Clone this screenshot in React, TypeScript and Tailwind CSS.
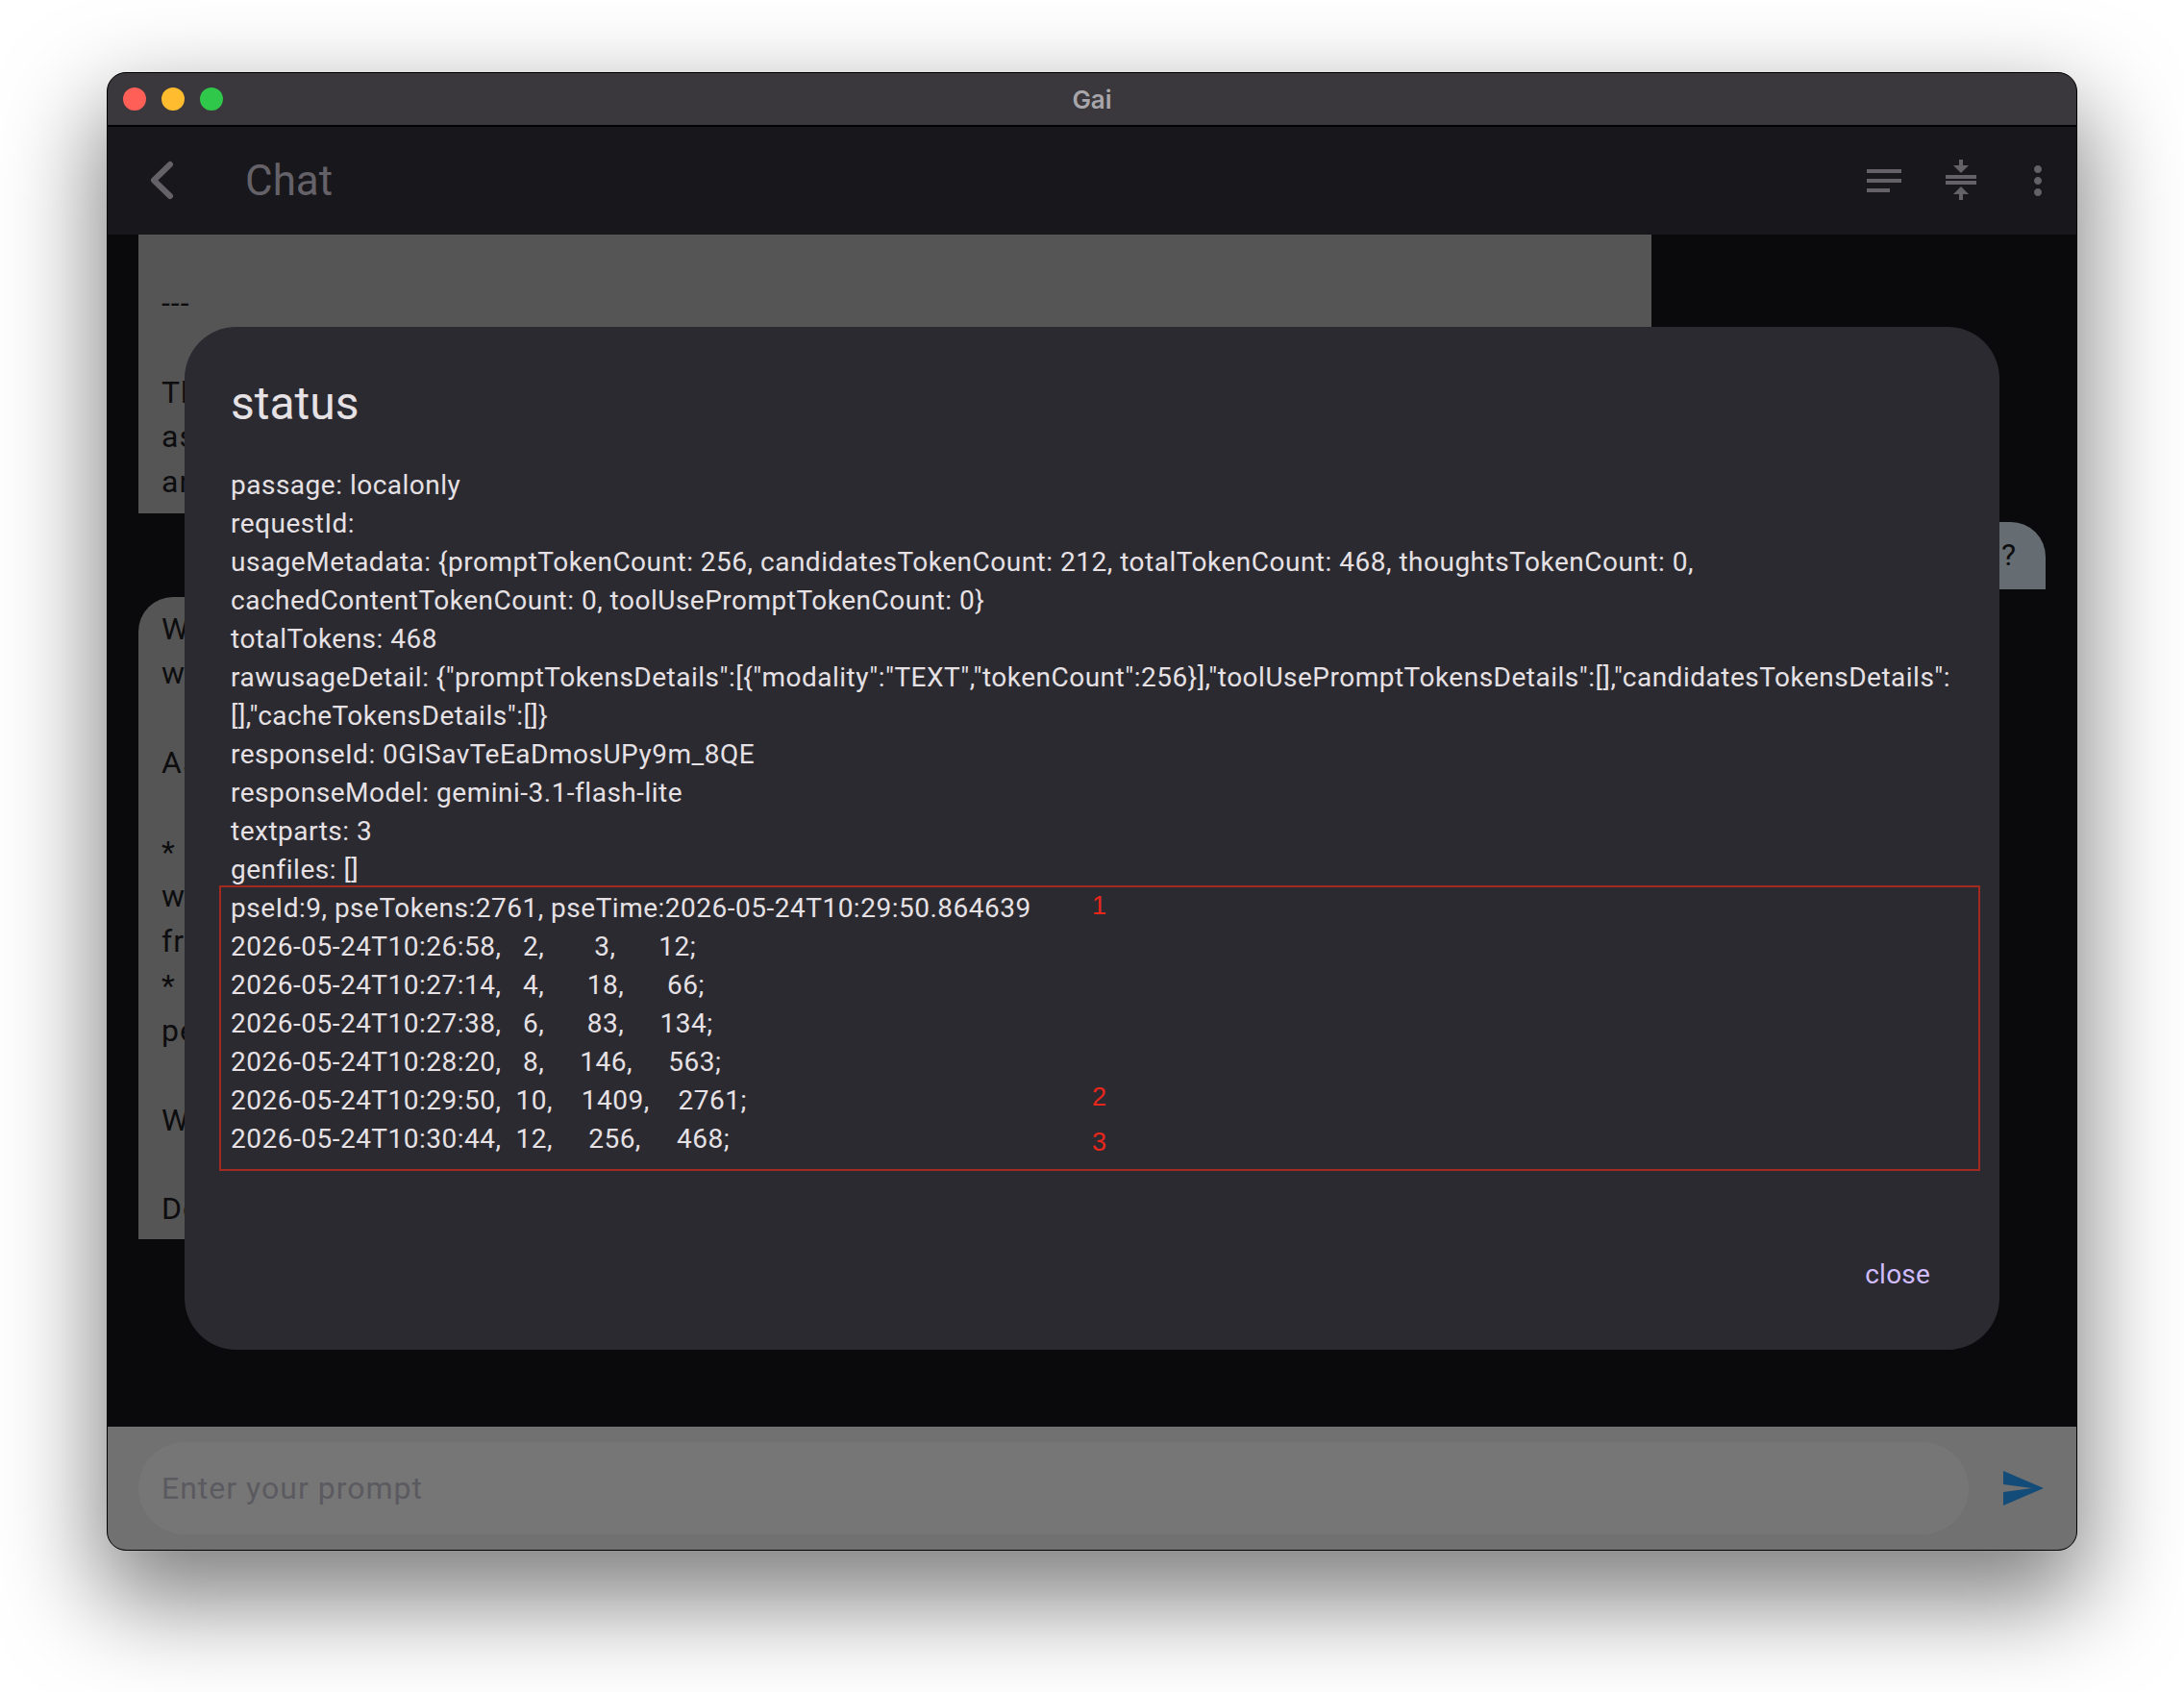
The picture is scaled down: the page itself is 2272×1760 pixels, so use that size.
import React from 'react';
import { MdCompress, MdMoreVert, MdNotes, MdSend } from 'react-icons/md';

const infoLines = [
  'passage: localonly',
  'requestId:',
  'usageMetadata: {promptTokenCount: 256, candidatesTokenCount: 212, totalTokenCount: 468, thoughtsTokenCount: 0,',
  'cachedContentTokenCount: 0, toolUsePromptTokenCount: 0}',
  'totalTokens: 468',
  'rawusageDetail: {"promptTokensDetails":[{"modality":"TEXT","tokenCount":256}],"toolUsePromptTokensDetails":[],"candidatesTokensDetails":',
  '[],"cacheTokensDetails":[]}',
  'responseId: 0GISavTeEaDmosUPy9m_8QE',
  'responseModel: gemini-3.1-flash-lite',
  'textparts: 3',
  'genfiles: []',
];

const tokenRows = [
  'pseId:9, pseTokens:2761, pseTime:2026-05-24T10:29:50.864639',
  '2026-05-24T10:26:58,   2,       3,      12;',
  '2026-05-24T10:27:14,   4,      18,      66;',
  '2026-05-24T10:27:38,   6,      83,     134;',
  '2026-05-24T10:28:20,   8,     146,     563;',
  '2026-05-24T10:29:50,  10,    1409,    2761;',
  '2026-05-24T10:30:44,  12,     256,     468;',
];

const bubbleLines = ['We', 'wi', '', 'As', '', '*', 'wi', 'fr', '*', 'pe', '', 'We', '', 'Do'];

const StatusDialog: React.FC = () => (
  <div className="absolute left-[80px] top-[96px] flex h-[1064px] w-[1888px] flex-col rounded-[54px] bg-[#2b2a30] pt-[48px]">
    <h2 className="px-[48px] pb-[33px] text-[48px] leading-[64px] tracking-normal text-[#e6e1e5]">status</h2>
    <div className="px-[48px] text-[28px] leading-[40px] tracking-[0.5px] whitespace-pre text-[#e6e1e5]">
      {infoLines.map((line) => (
        <div key={line}>{line}</div>
      ))}
      <div className="relative">
        {tokenRows.map((row) => (
          <div key={row}>{row}</div>
        ))}
        {/* annotation drawn over the rows */}
        <div className="absolute -top-[4px] -bottom-[13px] -left-[12px] -right-[28px] border-2 border-[#a32a20]" />
        <span className="absolute left-[896px] top-[1px] font-['Liberation_Sans'] text-[27px] leading-[32px] tracking-normal text-[#e8261c]">1</span>
        <span className="absolute left-[896px] top-[200px] font-['Liberation_Sans'] text-[27px] leading-[32px] tracking-normal text-[#e8261c]">2</span>
        <span className="absolute left-[896px] top-[247px] font-['Liberation_Sans'] text-[27px] leading-[32px] tracking-normal text-[#e8261c]">3</span>
      </div>
    </div>
    <div className="mt-auto flex justify-end pr-[48px] pb-[50px]">
      <button className="px-[24px] text-[28px] leading-[56px] tracking-[0.2px] text-[#d0bcff]">close</button>
    </div>
  </div>
);

export default function App() {
  return (
    <div className="h-[1760px] w-[2272px] overflow-hidden bg-white pt-[75px] pl-[111px] font-['Roboto',sans-serif]">
      <div className="flex h-[1538px] w-[2050px] flex-col overflow-hidden rounded-[20px] border border-black bg-[#0a0a0c] shadow-[0_44px_100px_8px_rgba(0,0,0,0.5)]">
        {/* title bar */}
        <div className="relative flex h-[56px] shrink-0 items-center justify-center border-b-2 border-black bg-[#3a383d]">
          <div className="absolute left-[16px] top-[15px] flex gap-[16px]">
            <span className="size-[24px] rounded-full bg-[#ff5f57]" />
            <span className="size-[24px] rounded-full bg-[#febc2e]" />
            <span className="size-[24px] rounded-full bg-[#2fc84a]" />
          </div>
          <span className="font-['Inter'] text-[26px] font-semibold text-[#a8a6aa]">Gai</span>
        </div>

        {/* app bar */}
        <div className="flex h-[112px] shrink-0 items-center bg-[#18171b] pr-[16px] pl-[44px] text-[#646268]">
          <svg width="28" height="44" viewBox="0 0 28 44" fill="none" stroke="currentColor" strokeWidth="6" strokeLinecap="round" strokeLinejoin="round">
            <path d="M21 5 L4 21.5 L21 38" />
          </svg>
          <span className="ml-[71px] text-[44px] leading-[56px]">Chat</span>
          <div className="ml-auto flex gap-[32px]">
            <MdNotes size={48} />
            <MdCompress size={48} />
            <MdMoreVert size={48} />
          </div>
        </div>

        {/* message list, dimmed by the dialog */}
        <div className="relative flex flex-1 flex-col overflow-hidden text-[32px] leading-[46.4px] tracking-[1px] text-[#0d0d0f]">
          <div className="ml-[32px] w-[1574px] bg-[#555555] pt-[48px] pr-[24px] pb-[10px] pl-[24px]">
            <div>---</div>
            <div>&nbsp;</div>
            <div>The</div>
            <div>as</div>
            <div>an</div>
          </div>
          <div className="mt-[9px] mr-[32px] ml-auto h-[70px] w-[400px] rounded-tl-[36px] rounded-tr-[36px] bg-[#656c72] pt-[11px] pr-[30px] text-right">?</div>
          <div className="mt-[8px] ml-[32px] w-[1574px] rounded-tr-[36px] rounded-tl-[36px] bg-[#555555] pt-[10px] pr-[24px] pb-[8px] pl-[24px]">
            {bubbleLines.map((line, i) => (
              <div key={i}>{line || '\u00a0'}</div>
            ))}
          </div>
          <StatusDialog />
        </div>

        {/* prompt bar */}
        <div className="flex h-[128px] shrink-0 items-start bg-[#717171] pt-[16px] pl-[32px]">
          <div className="flex h-[96px] w-[1904px] items-center rounded-full bg-[#767676] px-[24px] text-[32px] tracking-[1px] text-[#5b5a60]">
            Enter your prompt
          </div>
          <MdSend size={48} className="mt-[24px] ml-[32px] text-[#134c78]" />
        </div>
      </div>
    </div>
  );
}
